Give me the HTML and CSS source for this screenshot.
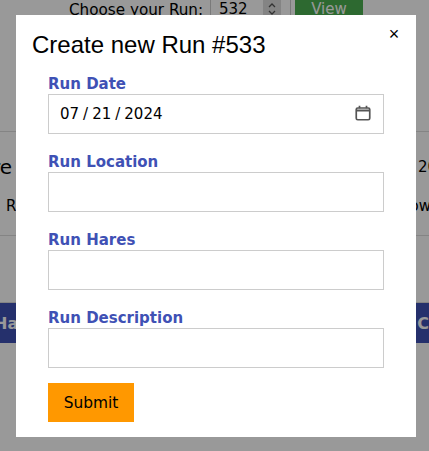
FILE: index.html
```html
<!DOCTYPE html>
<html lang="en">
<head>
<meta charset="utf-8">
<title>Create new Run</title>
<link rel="stylesheet" href="styles.css">
</head>
<body>
<main class="page">
  <div class="chooser">
    <span class="chooser-label">Choose your Run:</span>
    <div class="chooser-input">
      <span>532</span>
      <span class="spinner">
        <svg width="10" height="18" viewBox="0 0 10 18" fill="none" stroke="#555" stroke-width="1.3"><path d="M2 7l3-3 3 3M2 11l3 3 3-3"/></svg>
      </span>
    </div>
    <span class="chooser-view">View</span>
  </div>
  <section class="info">
    <div class="info-top"><span class="info-title">re</span><span class="info-date">20</span></div>
    <div class="info-bottom"><span>R</span><span>ow</span></div>
  </section>
  <nav class="tabs"><span>Ha</span><span>C</span></nav>
</main>
<div class="overlay">
  <div class="modal">
    <button class="close" type="button" aria-label="Close">×</button>
    <h1 class="modal-title">Create new Run #533</h1>
    <form class="form">
      <div class="field">
        <label class="field-label" for="date">Run Date</label>
        <div class="date-wrap">
          <input class="field-input date-input" id="date" type="date" value="2024-07-21">
          <svg class="date-icon" width="16" height="16" viewBox="0 0 16 16" fill="none" stroke="#555" stroke-width="1.7"><rect x="1.25" y="3" width="13.5" height="11.75" rx="1.5"/><path d="M1.5 5.5h13" stroke-width="2"/><path d="M4.5 .8v2.5M11.5 .8v2.5" stroke-width="1.7"/></svg>
        </div>
      </div>
      <div class="field">
        <label class="field-label" for="location">Run Location</label>
        <input class="field-input" id="location" type="text">
      </div>
      <div class="field">
        <label class="field-label" for="hares">Run Hares</label>
        <input class="field-input" id="hares" type="text">
      </div>
      <div class="field">
        <label class="field-label" for="description">Run Description</label>
        <input class="field-input" id="description" type="text">
      </div>
      <button class="submit" type="button">Submit</button>
    </form>
  </div>
</div>
</body>
</html>
```
FILE: styles.css
```css
* { box-sizing: border-box; }
html, body { margin: 0; height: 100%; overflow: hidden; }
body { background: #fff; color: #000; font-family: "DejaVu Sans", sans-serif; font-size: 15px; }

.page { height: 451px; overflow: hidden; }

.chooser { display: flex; align-items: flex-start; height: 132px; border-bottom: 1px solid #ddd; padding-left: 69px; }
.chooser-label { font-size: 15.2px; line-height: 20px; white-space: nowrap; width: 141px; flex: none; }
.chooser-input { display: flex; justify-content: space-between; align-items: center; width: 81px; height: 30px; margin-top: -6px; padding: 0 9px 0 8px; border: 1px solid #ccc; background: #fff; font-size: 15px; flex: none; }
.spinner { display: flex; justify-content: center; width: 18px; height: 18px; background: #ddd; }
.chooser-view { width: 68px; height: 30px; margin-left: 4px; margin-top: -6px; padding-top: 6px; background: #4caf50; color: #fff; text-align: center; flex: none; }

.info { height: 104px; border-bottom: 1px solid #ddd; }
.info-top { display: flex; justify-content: space-between; align-items: center; height: 44px; padding-top: 26px; margin-left: -8px; }
.info-title { font-size: 20px; }
.info-date { font-size: 15px; margin-right: -8px; }
.info-bottom { display: flex; justify-content: space-between; padding: 21px 0 0 6px; margin-right: -2px; font-size: 15px; }

.tabs { display: flex; justify-content: space-between; align-items: center; height: 41px; margin-top: 66px; background: #3f51b5; color: #fff; font-weight: 700; font-size: 16px; border-top: 1px solid #ddd; }
.tabs span:first-child { margin-left: -6px; }

.overlay { position: fixed; inset: 0; background: rgba(0, 0, 0, 0.4); padding-top: 15px; }
.modal { position: relative; width: 400px; height: 422px; margin-left: 16px; background: #fff; padding: 16px 32px 0 32px; }
.modal-title { margin: 0 0 0 -16px; font: 400 24px/28px "Liberation Sans", sans-serif; }

.close { position: absolute; top: 9px; right: 16px; width: 12px; height: 20px; padding: 0; border: 0; background: none; color: #000; font: 18px/20px "Liberation Sans", sans-serif; cursor: pointer; }

.form { display: flex; flex-direction: column; margin-top: 16px; }
.field { display: flex; flex-direction: column; margin-bottom: 18px; height: 60px; }
.field-label { height: 19px; font-size: 15px; line-height: 19px; font-weight: 700; color: #3f51b5; }
.field-input { width: 336px; height: 40px; padding: 0 10px; border: 1px solid #ccc; border-radius: 0; background: #fff; color: #000; font: 15px "DejaVu Sans", sans-serif; }
.date-wrap { position: relative; }
.date-input { display: block; }
.date-input::-webkit-calendar-picker-indicator { opacity: 0; }
.date-input::-webkit-datetime-edit-text { padding: 0 3px; }
.date-icon { position: absolute; top: 11px; right: 13px; pointer-events: none; }
.submit { width: 86px; height: 39px; margin-top: -4px; padding: 0; border: 0; background: #ff9800; color: #000; font: 15.4px "DejaVu Sans", sans-serif; }
```
